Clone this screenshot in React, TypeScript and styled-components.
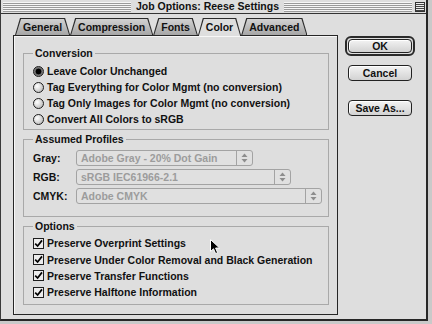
import React from 'react';
import styled, { createGlobalStyle } from 'styled-components';

const GlobalStyles = createGlobalStyle`
  html, body {
    margin: 0;
    padding: 0;
    background: #c9c9c9;
  }
  body {
    font-family: "Liberation Sans", Arial, sans-serif;
    font-size: 10.5px;
    font-weight: bold;
    color: #111;
  }
`;

const Screen = styled.div`
  position: relative;
  width: 432px;
  height: 324px;
  overflow: hidden;
  background: #c9c9c9;
`;

const Dialog = styled.div`
  width: 428px;
  height: 321px;
  box-sizing: border-box;
  border-left: 1px solid #3a3a3a;
  border-right: 2px solid #262626;
  border-bottom: 2px solid #262626;
  background: #dedede;
  display: flex;
  flex-direction: column;
`;

const TitleBar = styled.div`
  height: 13px;
  display: flex;
  align-items: center;
  padding: 0 1px 0 2px;
  border-bottom: 1px solid #333;
  background: #dedede;
`;

const Stripes = styled.div`
  flex: 1;
  height: 10px;
  background: repeating-linear-gradient(to bottom, #f6f6f6 0 1px, #9a9a9a 1px 2px);
`;

const Title = styled.div`
  padding: 0 5px;
  line-height: 13px;
  white-space: nowrap;
`;

const CollapseBox = styled.div`
  width: 10px;
  height: 10px;
  margin-left: 3px;
  box-sizing: border-box;
  border: 1px solid #333;
  background: repeating-linear-gradient(to bottom, #eee 0 1px, #444 1px 2px);
`;

const Body = styled.div`
  flex: 1;
  display: flex;
  padding: 4px 0 0 12px;
`;

const LeftColumn = styled.div`
  width: 325px;
  display: flex;
  flex-direction: column;
`;

const TabRow = styled.div`
  height: 17px;
  display: flex;
  align-items: flex-start;
  padding-left: 2px;
`;

const Tab = styled.div<{ $active?: boolean }>`
  position: relative;
  isolation: isolate;
  z-index: ${p => (p.$active ? 2 : 1)};
  height: ${p => (p.$active ? 18 : 17)}px;
  box-sizing: border-box;
  padding: 2px 8px 0;
  line-height: 15px;
  white-space: nowrap;

  &::before,
  &::after {
    content: '';
    position: absolute;
    z-index: -1;
    clip-path: polygon(5px 0, calc(100% - 5px) 0, 100% 100%, 0 100%);
  }
  &::before {
    inset: 0;
    background: #2a2a2a;
  }
  &::after {
    top: 1px;
    left: 1px;
    right: 1px;
    bottom: 0;
    background: ${p => (p.$active ? '#dedede' : 'linear-gradient(#d2d2d2, #a6a6a6)')};
  }
`;

const Panel = styled.div`
  width: 325px;
  height: 280px;
  box-sizing: border-box;
  border: 1px solid #262626;
  box-shadow: inset 1px 1px 0 #f7f7f7;
  background: #dedede;
  padding: 11px 8px 0 9px;
  display: flex;
  flex-direction: column;
  gap: 3px;
`;

const Group = styled.fieldset<{ $top: number; $bottom: number; $gap?: number }>`
  margin: 0;
  min-width: 0;
  padding: ${p => p.$top}px 0 ${p => p.$bottom}px 9px;
  border: 1px solid #a9a9a9;
  display: flex;
  flex-direction: column;
  gap: ${p => p.$gap || 0}px;
`;

const Legend = styled.legend`
  padding: 0 2px;
  margin-left: 0;
  line-height: 13px;
`;

const OptionRow = styled.label<{ $height?: number }>`
  height: ${p => p.$height || 16}px;
  display: flex;
  align-items: center;
  gap: 3px;
  white-space: nowrap;
`;

const Radio = styled.span<{ $checked?: boolean }>`
  width: 11px;
  height: 11px;
  box-sizing: border-box;
  flex-shrink: 0;
  border-radius: 50%;
  border: 1px solid #1e1e1e;
  background: ${p =>
    p.$checked
      ? 'radial-gradient(circle at 50% 50%, #000 0 2.6px, #666 3.2px, #a8a8a8 100%)'
      : 'radial-gradient(circle at 35% 35%, #fff 0, #e4e4e4 35%, #a9a9a9 100%)'};
`;

const Checkbox = styled.span`
  width: 11px;
  height: 11px;
  box-sizing: border-box;
  flex-shrink: 0;
  border: 1px solid #1e1e1e;
  background: #ececec;
  display: flex;

  svg {
    display: block;
  }
`;

const ProfileRow = styled.div`
  height: 16px;
  display: flex;
  align-items: center;
`;

const ProfileLabel = styled.span`
  width: 43px;
  flex-shrink: 0;
`;

const Popup = styled.div<{ $width: number }>`
  width: ${p => p.$width}px;
  height: 16px;
  box-sizing: border-box;
  border: 1px solid #a3a3a3;
  border-radius: 3px;
  background: #e0e0e0;
  color: #9c9c9c;
  display: flex;
`;

const PopupText = styled.span`
  flex: 1;
  padding-left: 4px;
  line-height: 14px;
  white-space: nowrap;
`;

const PopupArrow = styled.span`
  width: 15px;
  border-left: 1px solid #a3a3a3;
  display: flex;
  align-items: center;
  justify-content: center;
`;

const ButtonColumn = styled.div`
  width: 70px;
  margin-left: 7px;
  padding-top: 18px;
  display: flex;
  flex-direction: column;
  align-items: center;
`;

const DefaultRing = styled.div`
  width: 70px;
  height: 20px;
  box-sizing: border-box;
  border: 2px solid #2a2a2a;
  border-radius: 6px;
  padding: 1px 0 0 1px;
  background: #dedede;
`;

const Button = styled.div<{ $height?: number; $gap?: number }>`
  width: 64px;
  height: ${p => p.$height || 16}px;
  margin-top: ${p => p.$gap || 0}px;
  box-sizing: border-box;
  border: 1px solid #222;
  border-radius: 4px;
  background: linear-gradient(#f3f3f3, #d2d2d2);
  box-shadow: inset 1px 1px 0 #fff;
  display: flex;
  align-items: center;
  justify-content: center;
  line-height: 1;
`;

const Cursor = styled.svg`
  position: absolute;
  left: 210px;
  top: 239px;
`;

function CheckMark() {
  return (
    <svg width="9" height="9" viewBox="0 0 9 9">
      <path d="M1.2 4.6 L3.6 7 L8 1.4" fill="none" stroke="#000" strokeWidth="1.7" />
    </svg>
  );
}

function UpDown() {
  return (
    <svg width="7" height="10" viewBox="0 0 7 10">
      <path d="M3.5 0.5 L6.5 4 L0.5 4 Z" fill="#8d8d8d" />
      <path d="M3.5 9.5 L6.5 6 L0.5 6 Z" fill="#8d8d8d" />
    </svg>
  );
}

const conversion = [
  'Leave Color Unchanged',
  'Tag Everything for Color Mgmt (no conversion)',
  'Tag Only Images for Color Mgmt (no conversion)',
  'Convert All Colors to sRGB',
];

const profiles = [
  { label: 'Gray:', value: 'Adobe Gray - 20% Dot Gain', width: 177 },
  { label: 'RGB:', value: 'sRGB IEC61966-2.1', width: 215 },
  { label: 'CMYK:', value: 'Adobe CMYK', width: 246 },
];

const options = [
  'Preserve Overprint Settings',
  'Preserve Under Color Removal and Black Generation',
  'Preserve Transfer Functions',
  'Preserve Halftone Information',
];

const tabs = ['General', 'Compression', 'Fonts', 'Color', 'Advanced'];

export default function App() {
  return (
    <Screen>
      <GlobalStyles />
      <Dialog>
        <TitleBar>
          <Stripes />
          <Title>Job Options: Reese Settings</Title>
          <Stripes />
          <CollapseBox />
        </TitleBar>

        <Body>
          <LeftColumn>
            <TabRow>
              {tabs.map(t => (
                <Tab key={t} $active={t === 'Color'}>{t}</Tab>
              ))}
            </TabRow>

            <Panel>
              <Group $top={3} $bottom={2}>
                <Legend>Conversion</Legend>
                {conversion.map((c, i) => (
                  <OptionRow key={c}>
                    <Radio $checked={i === 0} />
                    {c}
                  </OptionRow>
                ))}
              </Group>

              <Group $top={4} $bottom={12} $gap={3}>
                <Legend>Assumed Profiles</Legend>
                {profiles.map(p => (
                  <ProfileRow key={p.label}>
                    <ProfileLabel>{p.label}</ProfileLabel>
                    <Popup $width={p.width}>
                      <PopupText>{p.value}</PopupText>
                      <PopupArrow><UpDown /></PopupArrow>
                    </Popup>
                  </ProfileRow>
                ))}
              </Group>

              <Group $top={2} $bottom={3}>
                <Legend>Options</Legend>
                {options.map(o => (
                  <OptionRow key={o} $height={16.4}>
                    <Checkbox><CheckMark /></Checkbox>
                    {o}
                  </OptionRow>
                ))}
              </Group>
            </Panel>
          </LeftColumn>

          <ButtonColumn>
            <DefaultRing>
              <Button $height={14}>OK</Button>
            </DefaultRing>
            <Button $gap={9}>Cancel</Button>
            <Button $gap={19}>Save As...</Button>
          </ButtonColumn>
        </Body>
      </Dialog>

      <Cursor width="11" height="16" viewBox="0 0 11 16">
        <path d="M0.5 0.5 L0.5 12.5 L3.5 9.8 L5.6 14.6 L7.6 13.7 L5.6 9 L9.6 9 Z" fill="#000" stroke="#fff" strokeWidth="1" />
      </Cursor>
    </Screen>
  );
}
